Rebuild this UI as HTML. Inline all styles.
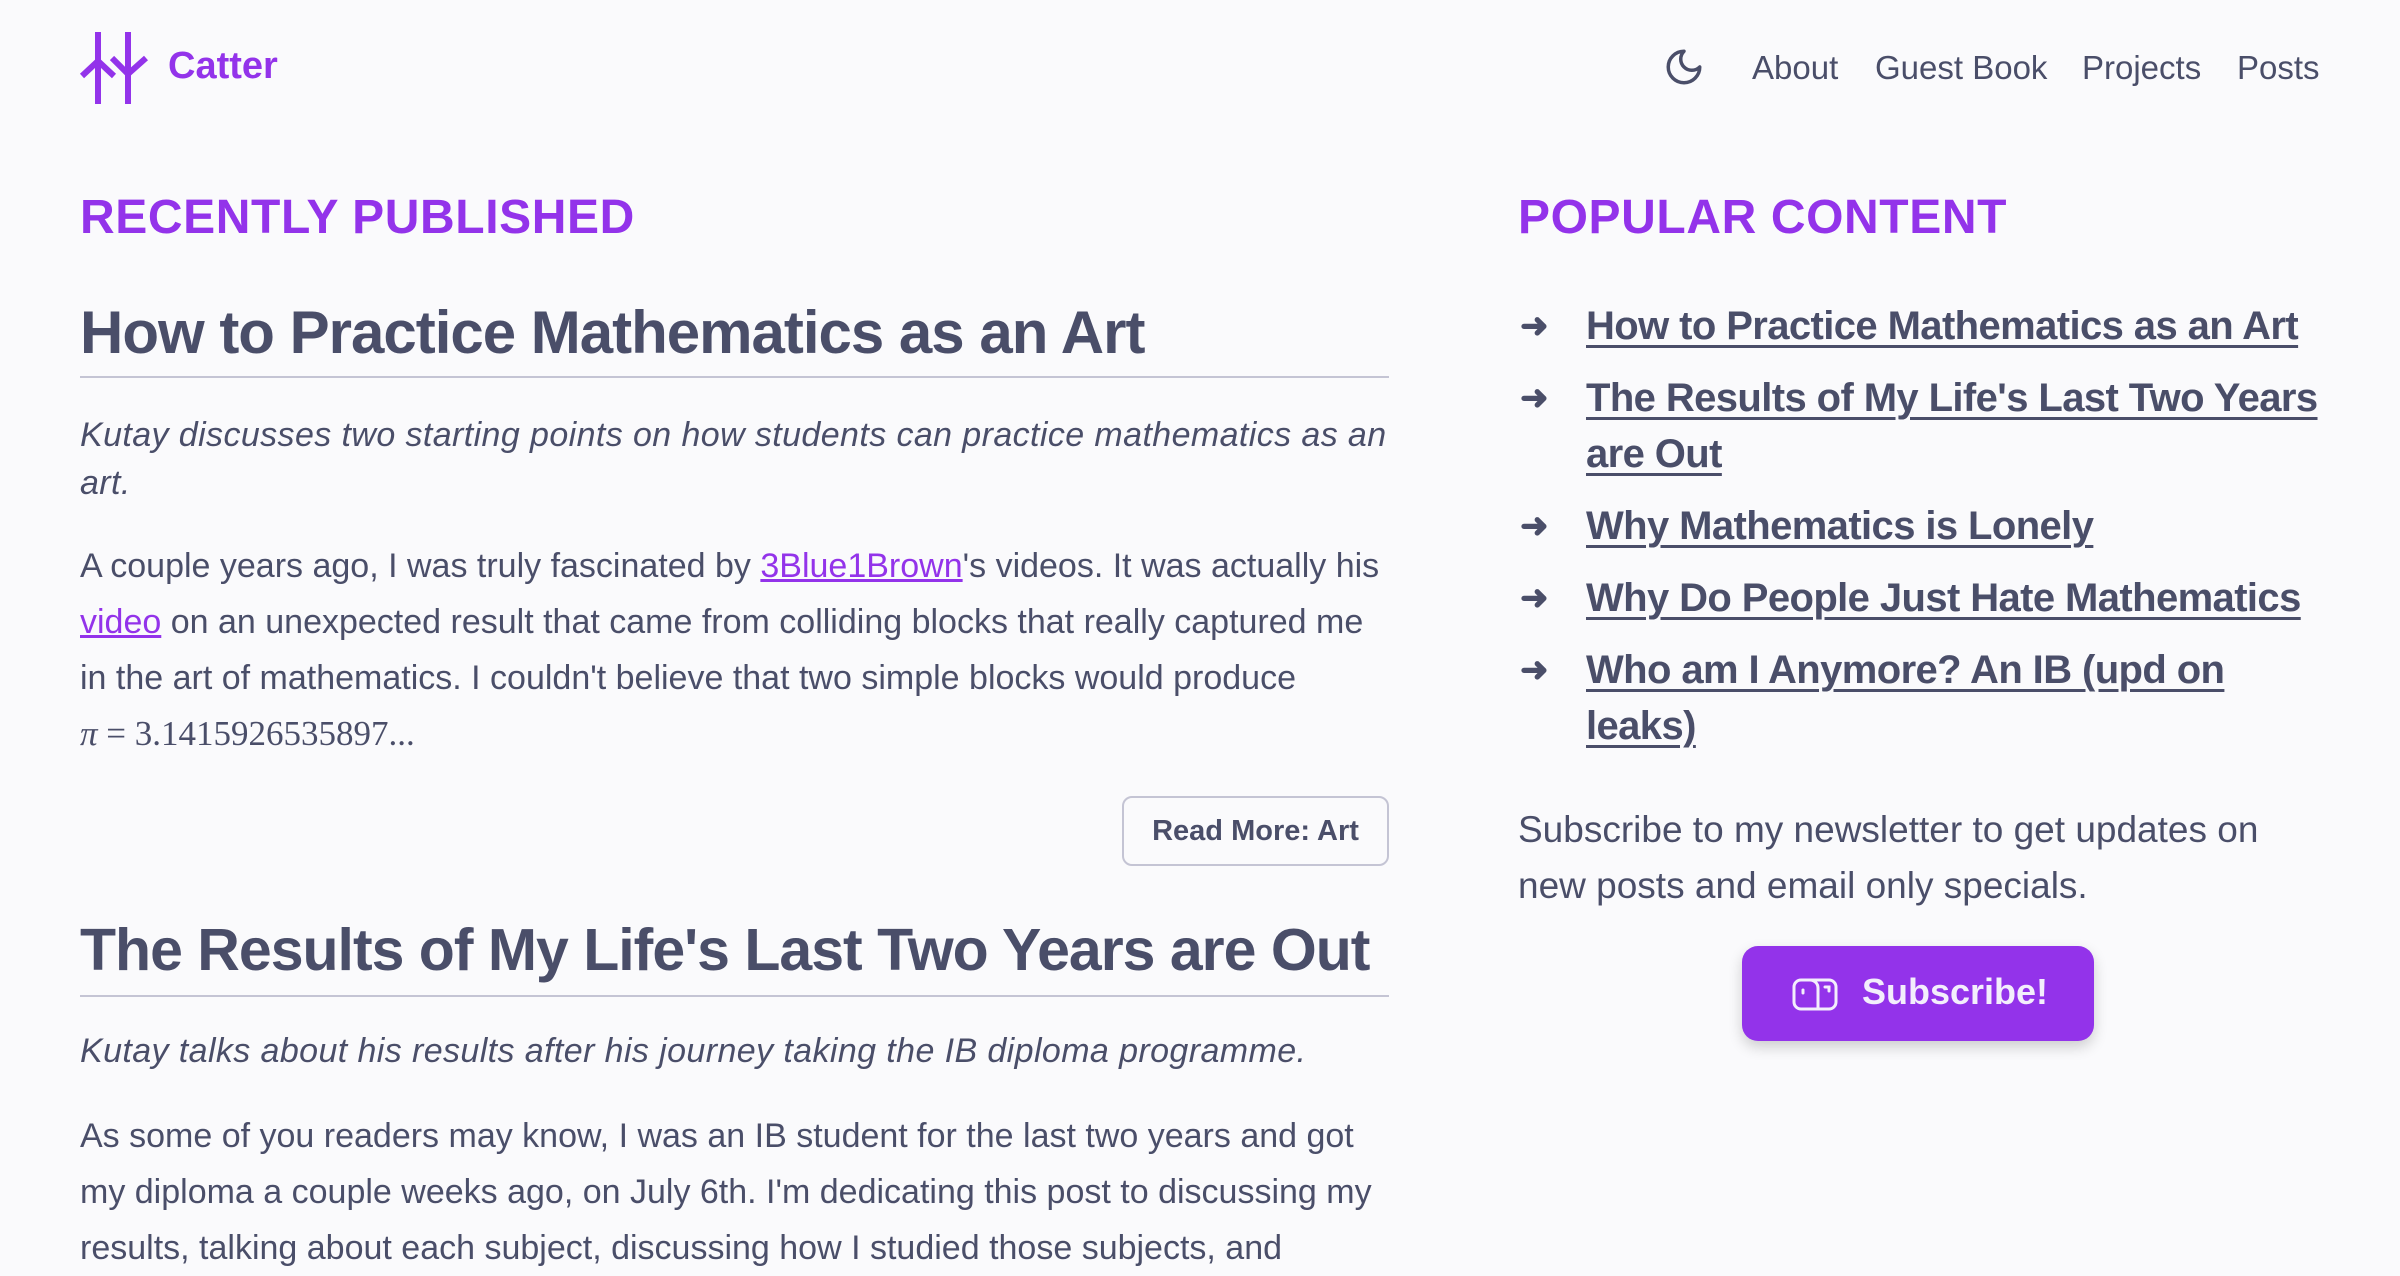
<!DOCTYPE html>
<html><head><meta charset="utf-8"><style>
*{margin:0;padding:0;box-sizing:border-box}
body{width:2400px;height:1260px;overflow:hidden;background:#fafafc;font-family:"Liberation Sans",sans-serif;color:#4a4e69;position:relative}
.a{position:absolute;white-space:nowrap}
.purple{color:#9333ea}
h2.sec{position:absolute;font-size:48px;font-weight:700;color:#9333ea;letter-spacing:0.6px}
.title{position:absolute;left:80px;width:1309px;font-size:60px;font-weight:700;color:#4a4e69;border-bottom:2px solid #c4c4d4;letter-spacing:-1px;white-space:nowrap}
.it{position:absolute;left:80px;width:1320px;font-size:34px;letter-spacing:0.4px;font-style:italic;line-height:48px}
.p{position:absolute;left:80px;width:1320px;font-size:34px;line-height:56px}
.p a{color:#9333ea;text-decoration:underline}
ul{list-style:none;position:absolute;left:1520px;top:298px;width:820px}
li{position:relative;padding-left:66px;font-size:40px;font-weight:700;line-height:56px;margin-bottom:16px;letter-spacing:-0.6px}
li span{text-decoration:underline;text-decoration-thickness:3px;text-underline-offset:6px}
li:before{content:"➜";position:absolute;left:0;top:0;font-size:34px}
</style></head><body>
<svg class="a" style="left:78px;top:30px" width="74" height="76" viewBox="0 0 74 76" fill="none" stroke="#9333ea" stroke-width="6"><path d="M20 2V74M4 46L20 31L36 46M50 2V74M34 28L50 44L68 28"/></svg>
<div class="a purple" style="left:168px;top:45px;font-size:38px;font-weight:700">Catter</div>
<svg class="a" style="left:1662px;top:46px" width="44" height="42" viewBox="0 0 24 24" fill="none" stroke="#4a4e69" stroke-width="2" stroke-linecap="round" stroke-linejoin="round"><path d="M12 3a6 6 0 0 0 9 9 9 9 0 1 1-9-9Z"/></svg>
<div class="a" style="left:1752px;top:49px;font-size:33px">About</div>
<div class="a" style="left:1875px;top:49px;font-size:33px">Guest Book</div>
<div class="a" style="left:2082px;top:49px;font-size:33px">Projects</div>
<div class="a" style="left:2237px;top:49px;font-size:33px">Posts</div>

<h2 class="sec" style="left:80px;top:190px">RECENTLY PUBLISHED</h2>
<div class="title" style="top:298px;height:80px">How to Practice Mathematics as an Art</div>
<div class="it" style="top:411px">Kutay discusses two starting points on how students can practice mathematics as an art.</div>
<div class="p" style="top:538px;width:1500px;white-space:nowrap">A couple years ago, I was truly fascinated by <a>3Blue1Brown</a>'s videos. It was actually his<br><a>video</a> on an unexpected result that came from colliding blocks that really captured me<br>in the art of mathematics. I couldn't believe that two simple blocks would produce<br><span style="font-family:'Liberation Serif',serif;font-size:35px"><i>π</i> = 3.1415926535897...</span></div>
<div class="a" style="left:1122px;top:796px;width:267px;height:70px;border:2px solid #c4c4d4;border-radius:10px;font-size:29px;text-align:center;line-height:66px;font-weight:600">Read More: Art</div>
<div class="title" style="top:916px;height:81px;letter-spacing:-1px;font-size:59px">The Results of My Life's Last Two Years are Out</div>
<div class="it" style="top:1027px">Kutay talks about his results after his journey taking the IB diploma programme.</div>
<div class="p" style="top:1108px">As some of you readers may know, I was an IB student for the last two years and got my diploma a couple weeks ago, on July 6th. I'm dedicating this post to discussing my results, talking about each subject, discussing how I studied those subjects, and</div>

<h2 class="sec" style="left:1518px;top:190px">POPULAR CONTENT</h2>
<ul>
<li><span>How to Practice Mathematics as an Art</span></li>
<li><span>The Results of My Life's Last Two Years are Out</span></li>
<li><span>Why Mathematics is Lonely</span></li>
<li><span>Why Do People Just Hate Mathematics</span></li>
<li><span>Who am I Anymore? An IB (upd on leaks)</span></li>
</ul>
<div class="a" style="left:1518px;top:802px;width:790px;white-space:normal;font-size:37px;line-height:56px">Subscribe to my newsletter to get updates on new posts and email only specials.</div>
<div class="a" style="left:1742px;top:946px;width:352px;height:95px;background:#9333ea;border-radius:16px;box-shadow:0 6px 14px rgba(0,0,0,.18);color:#f3eefc;font-size:36px;font-weight:600">
<svg style="position:absolute;left:50px;top:32px" width="46" height="33" viewBox="0 0 46 33" fill="none" stroke="#f3eefc" stroke-width="3" stroke-linecap="round"><rect x="2" y="2" width="42" height="29" rx="7"/><path d="M18 2a8 8 0 0 1 8 8v21M11 12v3M33 9h4v4"/></svg>
<span style="position:absolute;left:120px;top:25px">Subscribe!</span></div>
</body></html>
